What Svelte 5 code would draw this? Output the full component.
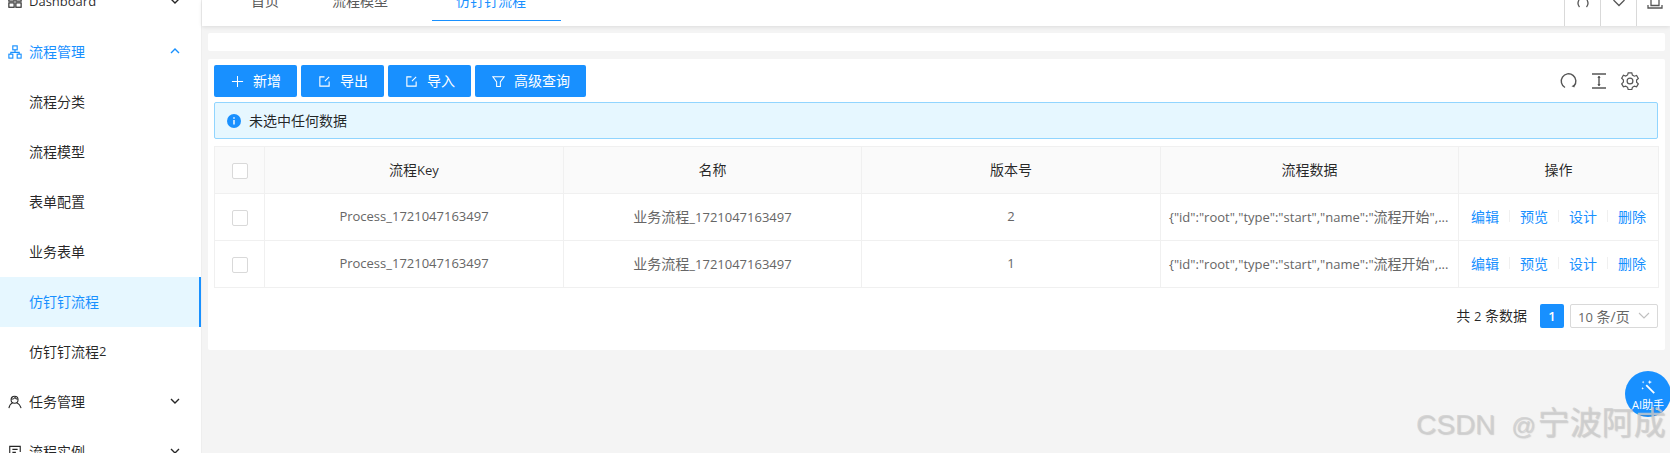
<script>
  const subMenus = ['流程分类', '流程模型', '表单配置', '业务表单', '仿钉钉流程', '仿钉钉流程'];
  const tabs = ['首页', '流程模型', '仿钉钉流程'];
  const rows = [
    { key: 'Process_1721047163497', prefix: '业务流程', suffix: '_1721047163497', version: 2 },
    { key: 'Process_1721047163497', prefix: '业务流程', suffix: '_1721047163497', version: 1 }
  ];
  const actions = ['编辑', '预览', '设计', '删除'];
</script>

<div class="layout">
  <aside class="sider">
    <div class="menu">
      <div class="menu-item">
        <svg class="menu-icon" viewBox="0 0 16 16" fill="none" stroke="currentColor" stroke-width="1.3">
          <rect x="1" y="2" width="6" height="5" /><rect x="9" y="2" width="6" height="5" />
          <rect x="1" y="9" width="6" height="5" /><rect x="9" y="9" width="6" height="5" />
        </svg>
        <span class="label lat">Dashboard</span>
        <svg class="arrow" viewBox="0 0 10 6" fill="none" stroke="currentColor" stroke-width="1.4"><path d="M1 1l4 4 4-4" /></svg>
      </div>
      <div class="menu-item open">
        <svg class="menu-icon" viewBox="0 0 16 16" fill="none" stroke="currentColor" stroke-width="1.3">
          <rect x="5.5" y="1" width="5" height="4.5" /><rect x="1" y="10.5" width="4.5" height="4.5" /><rect x="10.5" y="10.5" width="4.5" height="4.5" />
          <path d="M8 5.500v3M3.200 10.500V8.500h9.600v2" />
        </svg>
        <span class="label">流程管理</span>
        <svg class="arrow" viewBox="0 0 10 6" fill="none" stroke="currentColor" stroke-width="1.4"><path d="M1 5l4-4 4 4" /></svg>
      </div>
      {#each subMenus as item, i}
        <div class="menu-item sub" class:active={i === 4}>{item}{#if i === 5}<span class="lat">2</span>{/if}</div>
      {/each}
      <div class="menu-item">
        <svg class="menu-icon" viewBox="0 0 16 16" fill="none" stroke="currentColor" stroke-width="1.2">
          <circle cx="7.500" cy="5.500" r="4" /><path d="M1 15c.6-3.200 2.200-5.200 4.200-6M10 9c2 .8 4 2.800 5 6M4 4.800c1.500 0 3-.6 4-2 .6 1.200 1.800 2 3 2" />
        </svg>
        <span class="label">任务管理</span>
        <svg class="arrow" viewBox="0 0 10 6" fill="none" stroke="currentColor" stroke-width="1.4"><path d="M1 1l4 4 4-4" /></svg>
      </div>
      <div class="menu-item">
        <svg class="menu-icon" viewBox="0 0 16 16" fill="none" stroke="currentColor" stroke-width="1.3">
          <path d="M14 8V1.500H2v13h6M5 5h6M5 8.500h4" /><path d="M10 10.500h4v4h-4z" />
        </svg>
        <span class="label">流程实例</span>
        <svg class="arrow" viewBox="0 0 10 6" fill="none" stroke="currentColor" stroke-width="1.4"><path d="M1 1l4 4 4-4" /></svg>
      </div>
    </div>
  </aside>

  <div class="content">
    <header class="tabbar">
      <nav class="tabs">
        {#each tabs as tab, i}
          <div class="tab" class:current={i === 2}>{tab}</div>
        {/each}
      </nav>
      <div class="tools">
        <div class="tool">
          <svg viewBox="0 0 16 16" fill="none" stroke="#555" stroke-width="1.300"><path d="M4 0a6 6 0 0 0 .5 7M12 0a6 6 0 0 1-.5 7" /></svg>
        </div>
        <div class="tool">
          <svg viewBox="0 0 16 16" fill="none" stroke="#555" stroke-width="1.300"><path d="M2.500 0L8 5.500 13.500 0" /></svg>
        </div>
        <div class="tool">
          <svg viewBox="0 0 16 16" fill="none" stroke="#555" stroke-width="1.300"><path d="M4 0v5.500h8V0M1 5v3h14V5" /></svg>
        </div>
      </div>
    </header>

    <div class="strip"></div>

    <section class="card">
      <div class="toolbar">
        <button type="button" class="btn">
          <svg viewBox="0 0 14 14" fill="none" stroke="currentColor" stroke-width="1.100"><path d="M7 1v12M1 7h12" /></svg>
          新增
        </button>
        <button type="button" class="btn">
          <svg viewBox="0 0 14 14" fill="none" stroke="currentColor" stroke-width="1.200"><path d="M7 2H2v10h10V7M7.500 6.500L12 2" /></svg>
          导出
        </button>
        <button type="button" class="btn">
          <svg viewBox="0 0 14 14" fill="none" stroke="currentColor" stroke-width="1.200"><path d="M7 2H2v10h10V7M7.500 6.500L12 2" /></svg>
          导入
        </button>
        <button type="button" class="btn">
          <svg viewBox="0 0 14 14" fill="none" stroke="currentColor" stroke-width="1.100"><path d="M1 2h12L9 7.500V12.500H5V7.500z" /></svg>
          高级查询
        </button>
        <div class="table-tools">
          <svg viewBox="0 0 18 18" fill="none" stroke="#555" stroke-width="1.400">
            <path d="M6 15.500A7.300 7.300 0 1 1 15 14" /><path d="M15.800 12.300l-.4 3.200-2.900-1.200z" fill="#555" stroke="none" />
          </svg>
          <svg viewBox="0 0 18 18" fill="none" stroke="#555" stroke-width="1.400">
            <path d="M2 2h14M2 16h14M9 4v10" /><path d="M7.300 6L9 4l1.700 2zM7.300 12L9 14l1.700-2z" fill="#555" stroke="none" />
          </svg>
          <svg viewBox="0 0 18 18" fill="none" stroke="#555" stroke-width="1.200">
            <path d="M7.200 1.200h3.600l.6 2.300 1.900 1.100 2.300-.7 1.700 3-1.700 1.600v2.200l1.700 1.600-1.700 3-2.300-.7-1.900 1.100-.6 2.300H7.200l-.6-2.300-1.900-1.100-2.300.7-1.700-3L2.400 10.500V8.300L.7 6.700l1.700-3 2.300.7 1.900-1.100z" transform="translate(0 -.4)" />
            <circle cx="9" cy="9" r="2.900" />
          </svg>
        </div>
      </div>

      <div class="alert">
        <svg viewBox="0 0 14 14"><circle cx="7" cy="7" r="7" fill="#1890ff" /><path d="M7 6v4.500M7 3.300v1.400" stroke="#fff" stroke-width="1.400" /></svg>
        未选中任何数据
      </div>

      <table class="grid">
        <colgroup>
          <col style="width:50px" /><col style="width:299px" /><col style="width:298px" />
          <col style="width:299px" /><col style="width:298px" /><col style="width:200px" />
        </colgroup>
        <thead>
          <tr>
            <th><span class="check"></span></th>
            <th>流程<span class="lat">Key</span></th>
            <th>名称</th>
            <th>版本号</th>
            <th>流程数据</th>
            <th>操作</th>
          </tr>
        </thead>
        <tbody>
          {#each rows as row}
            <tr>
              <td><span class="check"></span></td>
              <td class="lat">{row.key}</td>
              <td>{row.prefix}<span class="lat">{row.suffix}</span></td>
              <td class="lat">{row.version}</td>
              <td class="json lat">&#123;"id":"root","type":"start","name":"<span class="cjk">流程开始</span>",...</td>
              <td>
                <div class="ops">
                  {#each actions as action, i}
                    {#if i > 0}<i class="divider"></i>{/if}
                    <a href="#top">{action}</a>
                  {/each}
                </div>
              </td>
            </tr>
          {/each}
        </tbody>
      </table>

      <div class="pager">
        <span class="total">共 <span class="lat">2</span> 条数据</span>
        <span class="page lat">1</span>
        <div class="size">
          <span><span class="lat">10</span> 条/页</span>
          <svg viewBox="0 0 12 7" fill="none" stroke="#bfbfbf" stroke-width="1.100"><path d="M1 1l5 5 5-5" /></svg>
        </div>
      </div>
    </section>
  </div>

  <div class="fab">
    <svg viewBox="0 0 18 18" fill="none" stroke="#fff">
      <path d="M7 7l9 9" stroke-width="2" />
      <path d="M11 1l.6 1.900 1.900.6-1.900.6L11 6l-.6-1.900-1.900-.6 1.900-.6zM3.500 2l.4 1.100 1.100.4-1.100.4-.4 1.100-.4-1.100L2 3.500l1.100-.4zM3 9l.4 1.100 1.100.4-1.100.4L3 12l-.4-1.100-1.100-.4 1.100-.4z" fill="#fff" stroke="none" />
    </svg>
    <span>AI助手</span>
  </div>
  <div class="watermark">CSDN <span class="wm-at">@</span><span class="wm-cjk">宁波阿成</span></div>
</div>

<style>
  :global(body) {
    margin: 0;
    font-family: "Open Sans", "Noto Sans CJK SC", sans-serif;
    font-size: 14px;
    color: rgba(0, 0, 0, 0.85);
  }

  .lat {
    font-size: 13px;
  }

  .cjk {
    font-size: 14px;
  }

  .layout {
    position: relative;
    display: flex;
    width: 1670px;
    height: 453px;
    overflow: hidden;
    background: #f4f4f4;
  }

  .sider {
    width: 201px;
    flex: none;
    background: #fff;
    border-right: 1px solid #eee;
  }

  .menu {
    margin-top: -23px;
  }

  .menu-item {
    display: flex;
    align-items: center;
    height: 50px;
    padding: 0 21px 2px 8px;
    box-sizing: border-box;
  }

  .menu-item .label {
    flex: 1;
    margin-left: 7px;
  }

  .menu-item.open {
    color: #1890ff;
  }

  .menu-item.sub {
    padding-left: 29px;
  }

  .menu-item.active {
    color: #1890ff;
    background: #e6f7ff;
    border-right: 2px solid #1890ff;
  }

  .menu-icon {
    width: 14px;
    height: 14px;
    margin-top: 1px;
  }

  .arrow {
    width: 10px;
    height: 6px;
  }

  .content {
    flex: 1;
    min-width: 0;
  }

  .tabbar {
    display: flex;
    justify-content: space-between;
    height: 26px;
    background: #fff;
    box-shadow: 0 1px 4px rgba(0, 0, 0, 0.1);
    overflow: hidden;
  }

  .tabs {
    display: flex;
    margin-top: -21px;
    padding-left: 34px;
    height: 42px;
    gap: 23px;
  }

  .tab {
    display: flex;
    align-items: center;
    padding: 0 15px;
    color: #595959;
  }

  .tab.current {
    color: #1890ff;
    padding: 0 35px 0 24px;
    margin-left: 6px;
    border-bottom: 1px solid #1890ff;
  }

  .tools {
    display: flex;
    margin-right: -2px;
  }

  .tool {
    display: flex;
    justify-content: center;
    width: 35px;
    border-left: 1px solid #d9d9d9;
  }

  .tool svg {
    width: 16px;
    height: 16px;
  }

  .strip {
    height: 18px;
    margin: 7px 5px 8px 6px;
    background: #fff;
    border-radius: 2px;
  }

  .card {
    height: 291px;
    box-sizing: border-box;
    margin: 0 5px 0 6px;
    padding: 6px 7px 0 6px;
    background: #fff;
    border-radius: 2px;
  }

  .toolbar {
    display: flex;
    gap: 4px;
    align-items: center;
    height: 32px;
  }

  .btn {
    display: flex;
    align-items: center;
    gap: 9px;
    height: 32px;
    padding: 0 16px 2px 17px;
    box-sizing: border-box;
    border: 0;
    border-radius: 2px;
    background: #1890ff;
    color: #fff;
    font: inherit;
  }

  .btn svg {
    width: 13px;
    height: 13px;
    margin-top: 2px;
  }

  .table-tools {
    margin-left: auto;
    display: flex;
    gap: 13px;
    padding-right: 19px;
  }

  .table-tools svg {
    width: 18px;
    height: 18px;
  }

  .alert {
    display: flex;
    align-items: center;
    gap: 8px;
    height: 37px;
    margin: 5px 0 7px;
    padding-left: 12px;
    box-sizing: border-box;
    background: #e6f7ff;
    border: 1px solid #91d5ff;
    border-radius: 2px;
    line-height: 33px;
  }

  .alert svg {
    width: 14px;
    height: 14px;
  }

  .grid {
    width: 1444px;
    table-layout: fixed;
    border-collapse: collapse;
    border: 1px solid #f0f0f0;
  }

  .grid th,
  .grid td {
    height: 47px;
    padding: 0 0 2px;
    box-sizing: border-box;
    border: 1px solid #f0f0f0;
    text-align: center;
    color: #666;
    font-weight: 400;
  }

  .grid th {
    background: #fafafa;
    color: rgba(0, 0, 0, 0.85);
  }

  .check {
    display: inline-block;
    width: 16px;
    height: 16px;
    box-sizing: border-box;
    vertical-align: middle;
    border: 1px solid #d9d9d9;
    border-radius: 2px;
    background: #fff;
  }

  .grid td.json {
    padding: 0 8px 2px;
    text-align: left;
    white-space: nowrap;
    overflow: hidden;
  }

  .ops {
    display: flex;
    justify-content: center;
    align-items: center;
  }

  .ops a {
    color: #1890ff;
    text-decoration: none;
  }

  .divider {
    width: 1px;
    height: 12px;
    margin: 0 10px;
    background: #f0f0f0;
  }

  .pager {
    display: flex;
    justify-content: flex-end;
    align-items: center;
    margin-top: 16px;
    height: 24px;
  }

  .total {
    margin-right: 13px;
    padding-bottom: 2px;
  }

  .page {
    width: 24px;
    height: 24px;
    line-height: 24px;
    margin-right: 6px;
    text-align: center;
    font-weight: 600;
    color: #fff;
    background: #1890ff;
    border-radius: 2px;
  }

  .size {
    display: flex;
    align-items: center;
    justify-content: space-between;
    width: 88px;
    height: 24px;
    box-sizing: border-box;
    padding: 0 7px 1px;
    border: 1px solid #d9d9d9;
    border-radius: 2px;
    color: #666;
  }

  .size svg {
    width: 12px;
    height: 7px;
  }

  .fab {
    position: absolute;
    left: 1625px;
    top: 371px;
    width: 46px;
    height: 46px;
    border-radius: 50%;
    background: #1890ff;
    color: #fff;
    font-size: 11px;
    display: flex;
    flex-direction: column;
    align-items: center;
  }

  .fab svg {
    width: 16px;
    height: 16px;
    margin-top: 8px;
  }

  .fab span {
    line-height: 16px;
    margin-top: 2px;
    white-space: nowrap;
  }

  .watermark {
    position: absolute;
    left: 1416px;
    top: 403px;
    font-family: "Liberation Sans", "Noto Sans CJK SC", sans-serif;
    font-size: 28px;
    line-height: 40px;
    word-spacing: 8px;
    white-space: nowrap;
    color: rgba(205, 205, 205, 0.8);
    text-shadow: 1px 1px 1px rgba(120, 120, 120, 0.3);
  }

  .wm-at {
    font-size: 24px;
    margin-right: 2px;
  }

  .wm-cjk {
    font-size: 32px;
  }
</style>
